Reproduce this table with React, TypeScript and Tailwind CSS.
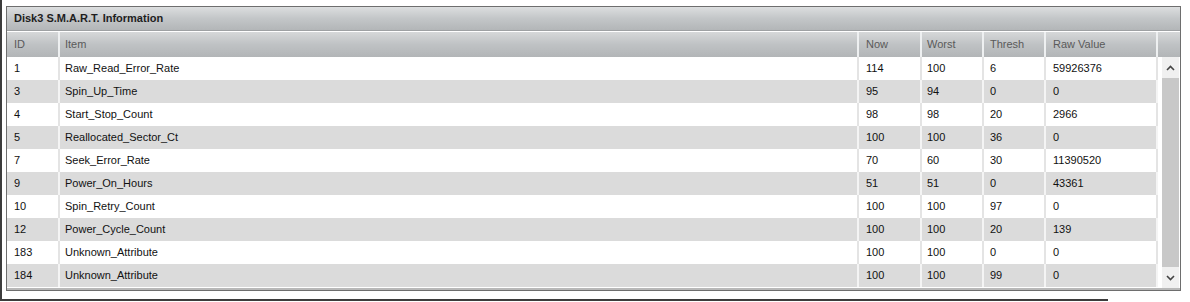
const rows = [
  ["1", "Raw_Read_Error_Rate", "114", "100", "6", "59926376"],
  ["3", "Spin_Up_Time", "95", "94", "0", "0"],
  ["4", "Start_Stop_Count", "98", "98", "20", "2966"],
  ["5", "Reallocated_Sector_Ct", "100", "100", "36", "0"],
  ["7", "Seek_Error_Rate", "70", "60", "30", "11390520"],
  ["9", "Power_On_Hours", "51", "51", "0", "43361"],
  ["10", "Spin_Retry_Count", "100", "100", "97", "0"],
  ["12", "Power_Cycle_Count", "100", "100", "20", "139"],
  ["183", "Unknown_Attribute", "100", "100", "0", "0"],
  ["184", "Unknown_Attribute", "100", "100", "99", "0"],
];

const headers = ["ID", "Item", "Now", "Worst", "Thresh", "Raw Value"];
const cols = [
  "w-[53px] pl-[7px]",
  "w-[799px] pl-[5px]",
  "w-[63px] pl-[7px]",
  "w-[62px] pl-[5px]",
  "w-[62px] pl-[6px]",
  "w-[112px] pl-[7px]",
];

export default function App() {
  return (
    <div
      className="w-[1190px] h-[302px] bg-white relative overflow-hidden"
      style={{ fontFamily: '"Liberation Sans", Arial, sans-serif' }}
    >
      {/* outer window edge */}
      <div className="w-[1108px] h-[301px] border-l-2 border-b-2 border-[#3c3c3c]" />

      <div className="absolute left-[6px] top-[6px] w-[1175px] h-[285px] bg-white border border-[#6e6e6e] flex flex-col">
        {/* title bar */}
        <div className="h-[24px] flex items-center px-[7px] bg-gradient-to-b from-[#dcdedf] via-[#c3c6c8] to-[#b3b6b8] border-b border-[#9ea1a3]">
          <span className="text-[11px] font-bold text-[#1e1e1e]">Disk3 S.M.A.R.T. Information</span>
        </div>
        <div className="h-px bg-white" />

        {/* header */}
        <div className="flex h-[25px] bg-gradient-to-b from-[#d6d8d9] via-[#bfc2c4] to-[#b2b5b7]">
          {headers.map((h, i) => (
            <div
              key={h}
              className={`${cols[i]} shrink-0 flex items-center border-r-2 border-r-[#eef0f1] text-[11px] text-[#5a5a5a]`}
            >
              {h}
            </div>
          ))}
          <div className="flex-1" />
        </div>

        {/* body */}
        <div className="flex flex-1">
          <div className="flex flex-col">
            {rows.map((r, ri) => (
              <div
                key={ri}
                className={`flex h-[23px] ${ri % 2 === 0 ? "bg-white" : "bg-[#dbdbdb]"}`}
              >
                {r.map((c, ci) => (
                  <div
                    key={ci}
                    className={`${cols[ci]} shrink-0 flex items-center text-[11px] text-[#111] border-r-2 ${
                      ri % 2 === 0 ? "border-r-[#e4e4e4]" : "border-r-[#f4f4f4]"
                    }`}
                  >
                    {c}
                  </div>
                ))}
              </div>
            ))}
          </div>

          {/* scrollbar */}
          <div className="flex-1 flex pl-[4px] pr-[1px]">
            <div className="flex-1 flex flex-col bg-[#c8c8c8]">
              <div className="h-[21px] bg-[#f0f0f0] flex items-center justify-center">
                <svg width="9" height="6" viewBox="0 0 9 6">
                  <path d="M1 5 L4.5 1.5 L8 5" fill="none" stroke="#444" strokeWidth="1.6" />
                </svg>
              </div>
              <div className="flex-1" />
              <div className="h-[21px] bg-[#f0f0f0] flex items-center justify-center">
                <svg width="9" height="6" viewBox="0 0 9 6">
                  <path d="M1 1 L4.5 4.5 L8 1" fill="none" stroke="#444" strokeWidth="1.6" />
                </svg>
              </div>
            </div>
          </div>
        </div>
        <div className="h-[2px] bg-[#b8b8b8]" />
      </div>
    </div>
  );
}
